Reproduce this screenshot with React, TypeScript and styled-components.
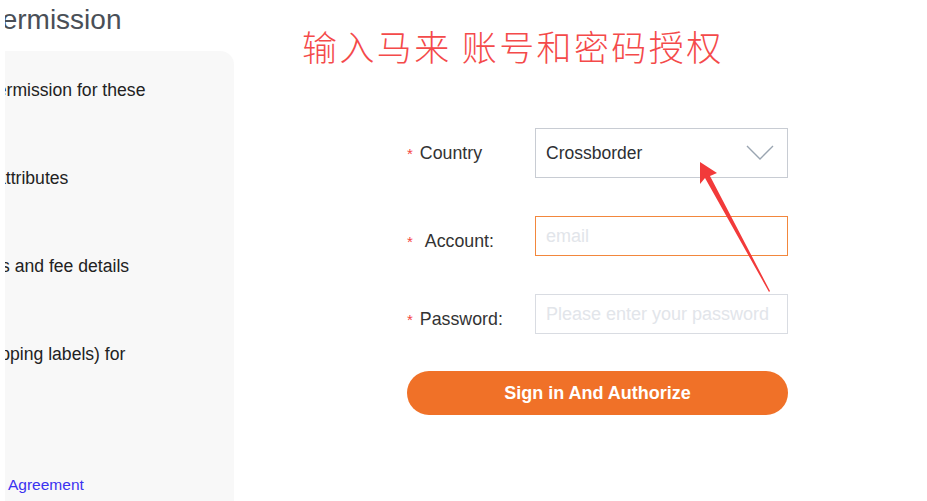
import React from 'react';
import styled, { createGlobalStyle } from 'styled-components';

const GlobalStyle = createGlobalStyle`
  html, body {
    margin: 0;
    padding: 0;
    background: #ffffff;
  }
  body {
    font-family: "Liberation Sans", Arial, sans-serif;
  }
`;

// the left column is cut off in the screenshot: shift each line so the same part shows
const permissions = [
  { text: 'permission for these', shift: 18 },
  { text: 'attributes', shift: 9 },
  { text: 'Orders and fee details', shift: 49 },
  { text: 'Documents (shipping labels) for', shift: 127 },
];

const App = () => {
  return (
    <Page>
      <GlobalStyle />
      <LeftColumn>
        <PageTitle>Permission</PageTitle>
        <Panel>
          <PermissionList>
            {permissions.map((p) => (
              <PermissionItem key={p.text} style={{ marginLeft: -p.shift }}>
                {p.text}
              </PermissionItem>
            ))}
          </PermissionList>
          <AgreementLink href="#">Agreement</AgreementLink>
        </Panel>
      </LeftColumn>

      <Main>
        <Notice>输入马来&nbsp;账号和密码授权</Notice>
        <Form>
          <Row>
            <Label>
              <Star>*</Star>Country
            </Label>
            <Select>
              <span>Crossborder</span>
              <svg width="28" height="16" viewBox="0 0 28 16">
                <polyline
                  points="1,1 14,14 27,1"
                  fill="none"
                  stroke="#9aa5b1"
                  strokeWidth="1.4"
                />
              </svg>
            </Select>
          </Row>
          <Row>
            <Label $offset={10}>
              <Star>*</Star>&nbsp;Account:
            </Label>
            <Input $focused placeholder="email" />
          </Row>
          <Row>
            <Label $offset={10}>
              <Star>*</Star>Password:
            </Label>
            <Input type="password" placeholder="Please enter your password" />
          </Row>
          <SubmitButton>Sign in And Authorize</SubmitButton>
        </Form>
      </Main>

      <ArrowMark width="90" height="140" viewBox="0 0 90 140">
        <polygon
          points="10,2 27,13 20,16 80,131 79,132 15,18 10,24"
          fill="#f23a3a"
        />
      </ArrowMark>
    </Page>
  );
};

const Page = styled.div`
  position: relative;
  display: flex;
  width: 927px;
  height: 501px;
  overflow: hidden;
  background: #ffffff;
`;

const LeftColumn = styled.aside`
  width: 229px;
  margin-left: 5px;
  display: flex;
  flex-direction: column;
  overflow: hidden;
`;

const PageTitle = styled.h2`
  margin: 0 0 0 -22px;
  height: 51px;
  line-height: 40px;
  font-size: 28px;
  font-weight: 400;
  color: #4a4f57;
  white-space: nowrap;
`;

const Panel = styled.div`
  flex: 1;
  display: flex;
  flex-direction: column;
  background: #f8f8f8;
  border-top-right-radius: 14px;
  padding: 27px 0 6px;
`;

const PermissionList = styled.ul`
  list-style: none;
  margin: 0;
  padding: 0;
  display: flex;
  flex-direction: column;
  gap: 64px;
`;

const PermissionItem = styled.li`
  font-size: 17.6px;
  line-height: 24px;
  color: #222;
  white-space: nowrap;
`;

const AgreementLink = styled.a`
  margin-top: auto;
  padding-left: 3px;
  font-size: 15.5px;
  line-height: 20px;
  color: #3b32f0;
  text-decoration: none;
`;

const Main = styled.main`
  flex: 1;
  padding-left: 68px;
  padding-top: 20px;
`;

const Notice = styled.h1`
  margin: 0;
  font-family: "Noto Sans CJK SC", sans-serif;
  font-size: 35px;
  line-height: 52px;
  font-weight: 300;
  letter-spacing: 2.4px;
  color: #f44a4a;
`;

const Form = styled.form`
  margin: 56px 0 0 105px;
  width: 381px;
  display: flex;
  flex-direction: column;
  gap: 38px;
`;

const Row = styled.div`
  display: flex;
  align-items: center;
`;

const Label = styled.label<{ $offset?: number }>`
  width: 128px;
  flex-shrink: 0;
  padding-top: ${({ $offset }) => $offset ?? 0}px;
  font-size: 17.8px;
  color: #333;
  white-space: nowrap;
`;

const Star = styled.span`
  color: #f5453f;
  font-size: 15px;
  margin-right: 7px;
`;

const Select = styled.div`
  box-sizing: border-box;
  width: 253px;
  height: 50px;
  display: flex;
  align-items: center;
  justify-content: space-between;
  padding: 0 13px 0 10px;
  border: 1px solid #c8ccd3;
  font-size: 17.5px;
  color: #2d2f33;
`;

const Input = styled.input<{ $focused?: boolean }>`
  box-sizing: border-box;
  width: 253px;
  height: 40px;
  padding: 0 10px;
  border: 1px solid ${({ $focused }) => ($focused ? '#f2873d' : '#d9dce2')};
  outline: none;
  font-family: "Liberation Sans", Arial, sans-serif;
  font-size: 18px;
  color: #333;

  &::placeholder {
    color: #e2e5ea;
  }
`;

const SubmitButton = styled.button`
  margin-top: -1px;
  width: 381px;
  height: 44px;
  border: none;
  border-radius: 22px;
  background: #f07128;
  color: #ffffff;
  font-family: "Liberation Sans", Arial, sans-serif;
  font-size: 18px;
  font-weight: 700;
`;

const ArrowMark = styled.svg`
  position: absolute;
  left: 690px;
  top: 160px;
`;

export default App;
